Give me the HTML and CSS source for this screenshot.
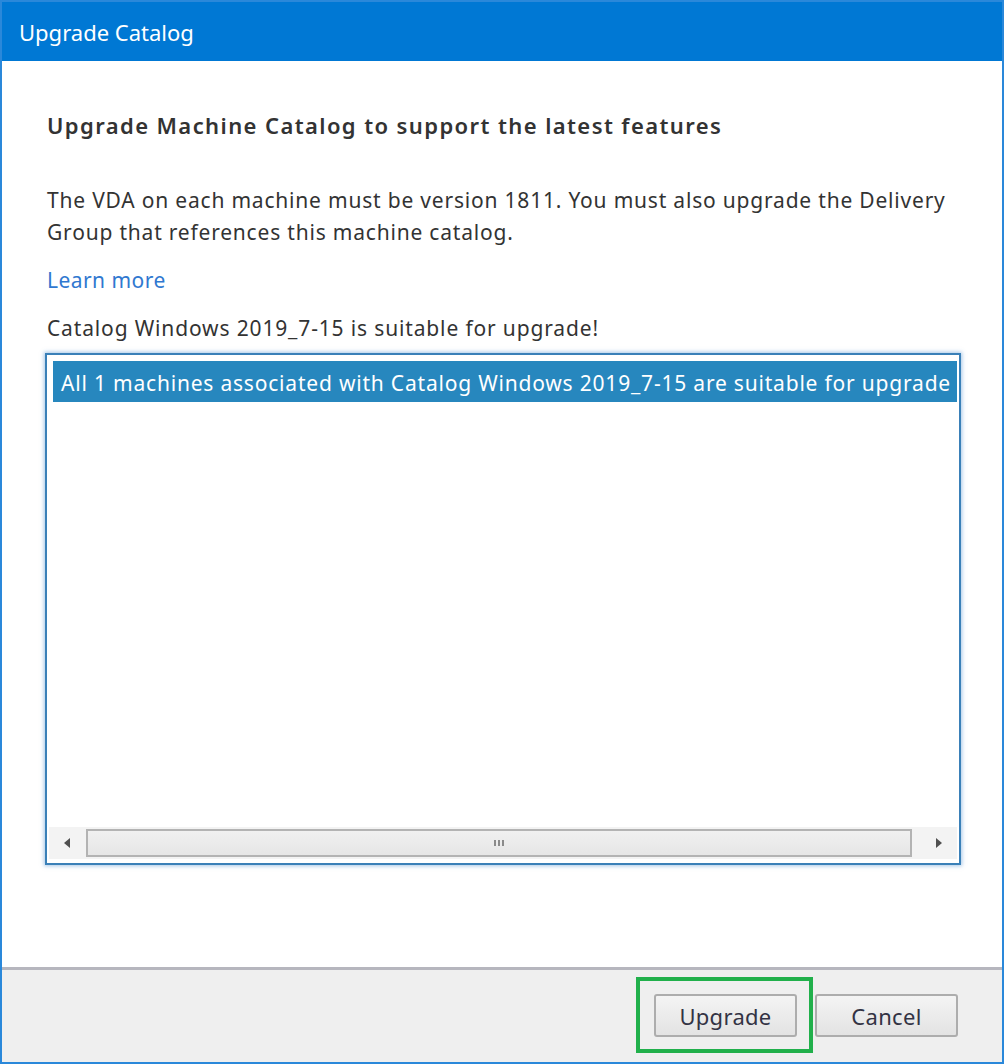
FILE: index.html
```html
<!DOCTYPE html>
<html>
<head>
<meta charset="utf-8">
<link rel="stylesheet" href="styles.css">
</head>
<body>
<div class="window">
  <div class="titlebar">Upgrade Catalog</div>
  <div class="content">
    <h1 class="heading">Upgrade Machine Catalog to support the latest features</h1>
    <p class="desc">The VDA on each machine must be version 1811. You must also upgrade the Delivery Group that references this machine catalog.</p>
    <a class="link" href="#">Learn more</a>
    <p class="status">Catalog Windows 2019_7-15 is suitable for upgrade!</p>
    <div class="listbox">
      <div class="listitems">
        <div class="item selected">All 1 machines associated with Catalog Windows 2019_7-15 are suitable for upgrade</div>
      </div>
      <div class="hscroll">
        <div class="arrow left"></div>
        <div class="thumb"><span class="grip"><i></i><i></i><i></i></span></div>
        <div class="arrow right"></div>
      </div>
    </div>
  </div>
  <div class="footer">
    <div class="highlight">
      <button class="btn">Upgrade</button>
    </div>
    <button class="btn">Cancel</button>
  </div>
</div>
</body>
</html>
```
FILE: styles.css
```css
html, body {
  margin: 0;
  padding: 0;
  background: #ffffff;
}
body {
  font-family: "Noto Sans", "Open Sans", "DejaVu Sans", sans-serif;
  color: #333333;
}
.window {
  width: 1004px;
  height: 1064px;
  box-sizing: border-box;
  border: 2px solid #2a88da;
  display: flex;
  flex-direction: column;
  background: #ffffff;
}
.titlebar {
  height: 59px;
  box-sizing: border-box;
  background: #0078d4;
  color: #ffffff;
  font-size: 22px;
  line-height: 57px;
  padding: 2px 0 0 17px;
  flex: none;
}
.content {
  flex: 1;
  padding: 0 0 0 43px;
  display: flex;
  flex-direction: column;
  align-items: flex-start;
}
.heading {
  margin: 49px 0 0 2px;
  font-size: 22px;
  font-weight: 600;
  letter-spacing: 1.4px;
  line-height: 30px;
  color: #333333;
}
.desc {
  margin: 44px 0 0 2px;
  width: 912px;
  font-size: 21px;
  letter-spacing: 0.8px;
  line-height: 32px;
}
.link {
  margin: 17px 0 0 2px;
  font-size: 21px;
  letter-spacing: 0.45px;
  line-height: 30px;
  color: #3078d0;
  text-decoration: none;
}
.status {
  margin: 18px 0 0 2px;
  font-size: 21px;
  letter-spacing: 0.85px;
  line-height: 30px;
}
.listbox {
  margin-top: 10px;
  width: 916px;
  height: 512px;
  box-sizing: border-box;
  border: 2px solid #3a80b8;
  box-shadow: 0 0 4px 1px rgba(90, 150, 210, 0.55);
  display: flex;
  flex-direction: column;
  background: #ffffff;
  padding: 2px;
}
.listitems {
  flex: 1;
  overflow: hidden;
  padding: 4px 0 0 4px;
}
.item {
  white-space: nowrap;
  font-size: 21px;
  letter-spacing: 0.8px;
  height: 41px;
  box-sizing: border-box;
  padding: 3px 0 0 8px;
  line-height: 38px;
  overflow: hidden;
}
.item.selected {
  background: #2787be;
  color: #ffffff;
}
.hscroll {
  height: 32px;
  flex: none;
  background: #f3f3f3;
  display: flex;
  align-items: center;
  margin: 0 0 2px 0;
}
.arrow {
  height: 32px;
  position: relative;
  flex: none;
}
.arrow.left {
  width: 37px;
}
.arrow.right {
  width: 45px;
}
.arrow::after {
  content: "";
  position: absolute;
  top: 11px;
  width: 0;
  height: 0;
  border-top: 5px solid transparent;
  border-bottom: 5px solid transparent;
}
.arrow.left::after {
  left: 15px;
  border-right: 6px solid #505050;
}
.arrow.right::after {
  left: 24px;
  border-left: 6px solid #505050;
}
.thumb {
  flex: 1;
  height: 28px;
  box-sizing: border-box;
  border: 2px solid #b3b3b3;
  background: linear-gradient(#f0f0f0, #e6e6e6);
  display: flex;
  align-items: center;
  justify-content: center;
}
.grip {
  display: flex;
  gap: 2px;
}
.grip i {
  width: 2px;
  height: 6px;
  background: #8a8a8a;
}
.footer {
  flex: none;
  height: 92px;
  border-top: 3px solid #b6b6be;
  background: #efefef;
  display: flex;
  justify-content: flex-end;
  align-items: flex-start;
  padding-right: 44px;
  gap: 2px;
}
.highlight {
  margin-top: 7px;
  border: 4px solid #21b04b;
  padding: 13px 12px 12px 14px;
}
.btn {
  width: 143px;
  height: 43px;
  box-sizing: border-box;
  border: 2px solid #adadad;
  border-radius: 3px;
  background: linear-gradient(#f4f4f4, #e3e3e3);
  font-family: "Noto Sans", "Open Sans", "DejaVu Sans", sans-serif;
  font-size: 22px;
  letter-spacing: 0.3px;
  color: #333344;
  padding: 0;
}
.footer > .btn {
  margin-top: 24px;
}
```
